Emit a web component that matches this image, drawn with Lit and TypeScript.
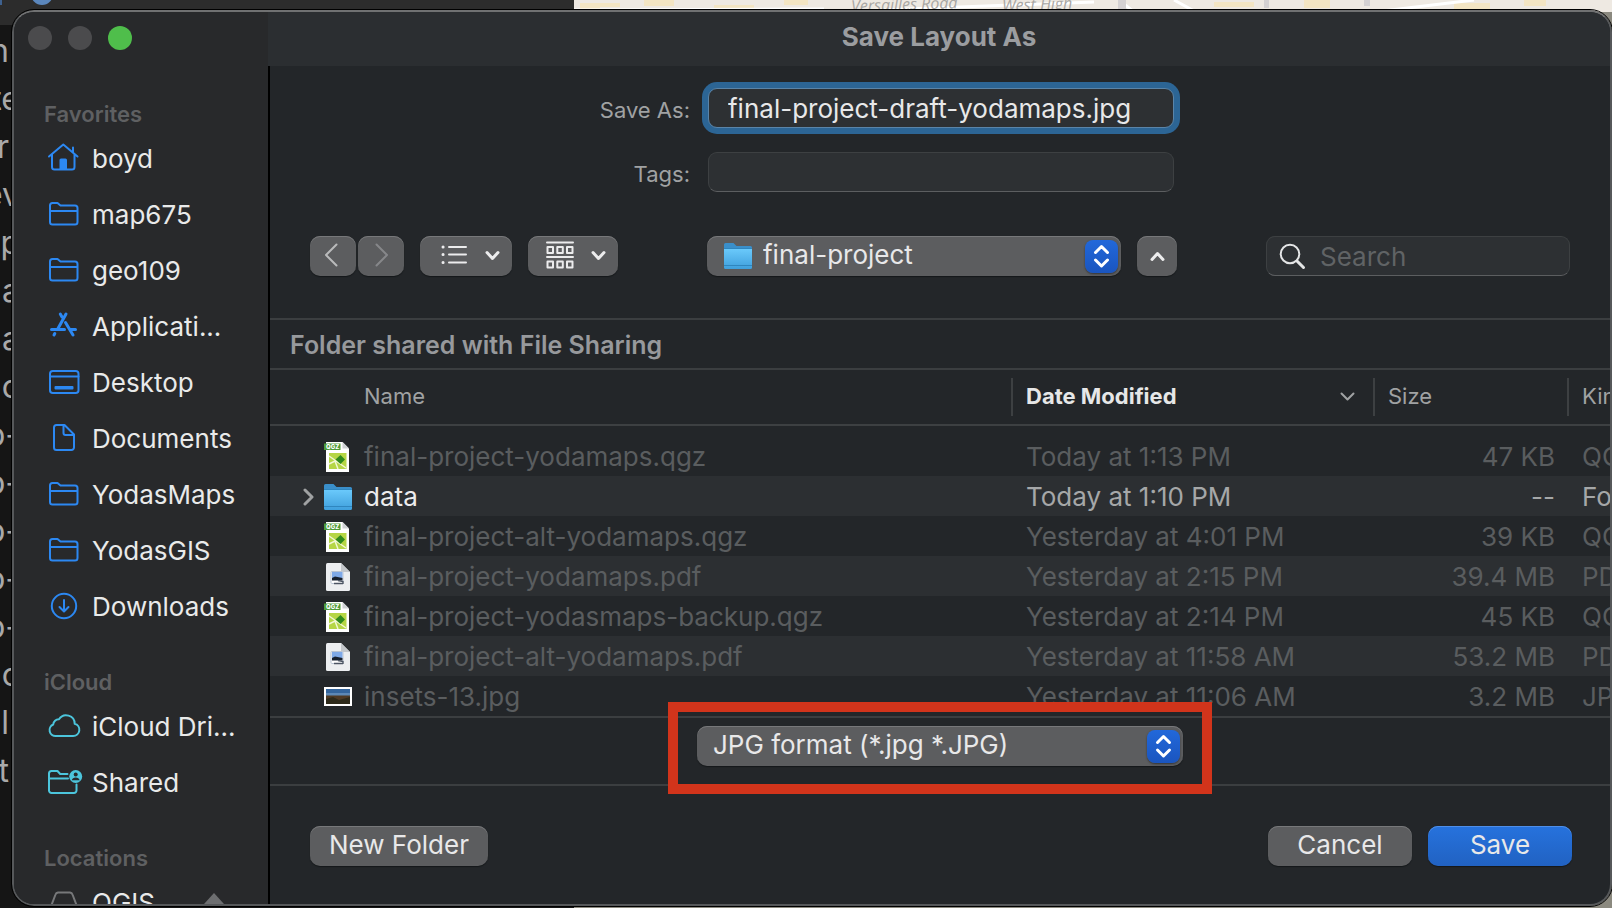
import { LitElement, html, svg, css, nothing } from "lit";
import { customElement, property, state } from "lit/decorators.js";
import { classMap } from "lit/directives/class-map.js";

type Place = { icon: string; label: string; eject?: boolean };
type Section = { title: string; cloud?: boolean; muted?: boolean; places: Place[] };
type FileRow = { icon: string; name: string; date: string; size: string; kind: string; folder?: boolean };

const SECTIONS: Section[] = [
  {
    title: "Favorites",
    places: [
      { icon: "home", label: "boyd" },
      { icon: "folder", label: "map675" },
      { icon: "folder", label: "geo109" },
      { icon: "apps", label: "Applicati..." },
      { icon: "desktop", label: "Desktop" },
      { icon: "document", label: "Documents" },
      { icon: "folder", label: "YodasMaps" },
      { icon: "folder", label: "YodasGIS" },
      { icon: "download", label: "Downloads" },
    ],
  },
  {
    title: "iCloud",
    cloud: true,
    places: [
      { icon: "cloud", label: "iCloud Dri..." },
      { icon: "shared", label: "Shared" },
    ],
  },
  { title: "Locations", muted: true, places: [{ icon: "drive", label: "QGIS", eject: true }] },
];

const FILES: FileRow[] = [
  { icon: "qgz", name: "final-project-yodamaps.qgz", date: "Today at 1:13 PM", size: "47 KB", kind: "QGIS" },
  { icon: "dir", name: "data", date: "Today at 1:10 PM", size: "--", kind: "Folder", folder: true },
  { icon: "qgz", name: "final-project-alt-yodamaps.qgz", date: "Yesterday at 4:01 PM", size: "39 KB", kind: "QGIS" },
  { icon: "pdf", name: "final-project-yodamaps.pdf", date: "Yesterday at 2:15 PM", size: "39.4 MB", kind: "PDF" },
  { icon: "qgz", name: "final-project-yodasmaps-backup.qgz", date: "Yesterday at 2:14 PM", size: "45 KB", kind: "QGIS" },
  { icon: "pdf", name: "final-project-alt-yodamaps.pdf", date: "Yesterday at 11:58 AM", size: "53.2 MB", kind: "PDF" },
  { icon: "jpg", name: "insets-13.jpg", date: "Yesterday at 11:06 AM", size: "3.2 MB", kind: "JPEG" },
];

const BACKDROP_LINES = ["n", "te", "r", "ev", "p", "a", "a", "c", "p-", "p-", "p-", "p-", "p-", "c", "l", "t"];
const LINE_ENDS = ["n", "r", "l", "t"];

const GLYPHS: Record<string, unknown> = {
  home: svg`<path d="M1 13.5 15.3 1.5 29.5 13.5M4 11.5V24a2.5 2.5 0 0 0 2.5 2.5h17.5a2.500 2.500 0 0 0 2.500-2.500V11.500M25 9V4.500"/><path class="solid" d="M11.500 26V17a1.500 1.500 0 0 1 1.500-1.500h4.500a1.500 1.500 0 0 1 1.500 1.500v9z"/>`,
  folder: svg`<path d="M2 23V6.500A2.500 2.500 0 0 1 4.500 4H9.500l3 2.500H27A2.500 2.500 0 0 1 29.500 9V23A2.500 2.500 0 0 1 27 25.500H4.500A2.500 2.500 0 0 1 2 23zM2 12H29.500"/>`,
  apps: svg`<path class="thick" d="M12.300 3 14 6M18 3 10 17.500M3.500 18.500H16.500M22.500 18.500H27.500M6.800 22.500 6 24M17.500 11.500 25 24"/>`,
  desktop: svg`<rect x="2" y="4" width="28.500" height="22" rx="2.800"/><path d="M2 9.500H30.500"/><rect class="solid" x="6.500" y="19" width="19" height="3.500" rx="1"/>`,
  document: svg`<path d="M6 24.500V4.500A2.500 2.500 0 0 1 8.500 2H16.500L26 11.500V24.500A2.500 2.500 0 0 1 23.500 27H8.500A2.500 2.500 0 0 1 6 24.500zM15.500 2.500V10a2 2 0 0 0 2 2h8"/>`,
  download: svg`<circle cx="16" cy="15" r="12.200"/><path d="M16 9V20M11.500 16 16 20.500 20.500 16"/>`,
  cloud: svg`<path d="M8 25H25a6.200 6.200 0 0 0 1.700-12.200A8.500 8.500 0 0 0 11 8.300 5.500 5.500 0 0 0 5.200 13.500 6 6 0 0 0 8 25z"/>`,
  shared: svg`<path d="M19.500 7H12.200L9.500 4H3.500A2.500 2.500 0 0 0 1 6.500V23.500A2.500 2.500 0 0 0 3.500 26H26A2.500 2.500 0 0 0 28.500 23.500V17.500M1 11.500H20"/><circle class="solid" cx="27.700" cy="9.500" r="6.500"/><circle class="hole" cx="27.700" cy="7.500" r="2"/><path class="hole" d="M23.800 13.200a4 3.600 0 0 1 7.800 0z"/>`,
  drive: svg`<path d="M2 22 7.500 7.500A3 3 0 0 1 10 5.500H22A3 3 0 0 1 24.500 7.500L30 22M2 19H30"/>`,
};

const folderArt = svg`
  <defs>
    <linearGradient id="front" x1="0" y1="0" x2="0" y2="1">
      <stop offset="0" stop-color="#6ac9fb"/><stop offset="1" stop-color="#3f9fdc"/>
    </linearGradient>
  </defs>
  <path fill="#3a8fca" d="M0 3.500A1.500 1.500 0 0 1 1.500 2H9.500l3 3H26.500A1.500 1.500 0 0 1 28 6.500V10H0z"/>
  <path fill="url(#front)" d="M0 8H28V26.500a1.500 1.500 0 0 1-1.500 1.500H1.500A1.500 1.500 0 0 1 0 26.500z"/>
  <path stroke="#2f86bf" stroke-width="1" d="M0 7.500H28M0 24.500H28" fill="none"/>`;

const FILE_ART: Record<string, unknown> = {
  dir: folderArt,
  qgz: svg`
    <path fill="#fff" d="M2 0H18.500L25 6.500V30H2z"/>
    <path fill="#cfd2d4" d="M18.500 0V6.500H25z"/>
    <rect x="5" y="11" width="17.500" height="16" fill="#b5d645"/>
    <path stroke="#f1f7d5" stroke-width="1.500" fill="none" d="M5 14 22 26M5 22l6-3 3 8"/>
    <path fill="#2f8a1d" d="M11.500 17.500 16.500 13 21 17.500 16.500 22z"/>
    <path fill="#4d9a38" d="M0 1.500H16.500V8H0z"/>
    <text x="2" y="7" font-family="Inter, sans-serif" font-weight="800" font-size="6" fill="#fff">QGZ</text>`,
  pdf: svg`
    <path fill="#eceef0" d="M3.500 1H17L26 10V27.500a1.500 1.500 0 0 1-1.500 1.500H3.500A1.500 1.500 0 0 1 2 27.500V2.500A1.500 1.500 0 0 1 3.500 1z"/>
    <path fill="#c3c7cb" d="M17 1V8.500A1.500 1.500 0 0 0 18.500 10H26z"/>
    <rect x="7" y="9.500" width="12" height="12" rx="1" fill="#fff" stroke="#b9c3d2" stroke-width="1"/>
    <rect x="8" y="10" width="10.500" height="6" fill="#7ea9e8"/>
    <path fill="#16202f" d="M8 16 11 14.500 18.500 16V18.500H8z"/>
    <path fill="none" stroke="#4c5563" stroke-width="1.300" d="M10 21.500h9M14 18.500l5 1v2.500"/>`,
  jpg: svg`
    <rect x="0" y="5" width="28" height="19" fill="#fff"/>
    <rect x="2" y="7" width="24" height="15" fill="#5d88b5"/>
    <rect x="2" y="7" width="24" height="4" fill="#34659c"/>
    <rect x="2" y="13.500" width="24" height="8.500" fill="#4f3a24"/>
    <path fill="#2e2a1a" d="M2 17l7-2 6 3 11-3v7H2z"/>`,
};

const chevronDown = svg`<path d="M1.500 2.500 7 8.500 12.500 2.500"/>`;

@customElement("place-list")
class PlaceList extends LitElement {
  @property({ attribute: false }) sections: Section[] = [];

  static styles = css`
    :host { display: block; }
    .title { margin: 0; height: 34px; padding-left: 30px; font-size: 22px; line-height: 34px; font-weight: 600; color: #5f6062; }
    .section + .section { margin-top: 30px; }
    ul { list-style: none; margin: 0; padding: 0; }
    .place { display: flex; align-items: center; gap: 12px; box-sizing: border-box; height: 56px; padding: 0 44px 2px 34px; font-size: 26px; color: #e9eaea; text-decoration: none; white-space: nowrap; }
    .icon { flex: none; width: 32px; height: 30px; overflow: visible; fill: none; stroke: #2c88f2; stroke-width: 2; stroke-linecap: round; stroke-linejoin: round; }
    .icon .solid { fill: #2c88f2; stroke: none; }
    .icon .thick { stroke-width: 3; }
    .cloud .icon { stroke: #4cc5dc; }
    .cloud .icon .solid { fill: #4cc5dc; }
    .icon .hole { fill: #28292b; stroke: none; }
    .muted .icon { stroke: #77787a; }
    .eject { width: 20px; height: 20px; margin-left: auto; fill: #6d6e70; }
  `;

  render() {
    return this.sections.map(
      (s) => html`
        <section class=${classMap({ section: true, cloud: !!s.cloud, muted: !!s.muted })}>
          <h2 class="title">${s.title}</h2>
          <ul>
            ${s.places.map(
              (p) => html`<li>
                <a class="place" href="#">
                  <svg class="icon" viewBox="0 0 32 30" aria-hidden="true">${GLYPHS[p.icon]}</svg>
                  <span>${p.label}</span>
                  ${p.eject ? html`<svg class="eject" viewBox="0 0 20 20" aria-hidden="true"><path d="M10 1 20 12H0z" /></svg>` : nothing}
                </a>
              </li>`
            )}
          </ul>
        </section>
      `
    );
  }
}

@customElement("popup-select")
class PopupSelect extends LitElement {
  @property() label = "";
  @property() value = "";
  @property({ type: Boolean }) folder = false;

  static styles = css`
    :host { display: grid; }
    select, .decor { grid-area: 1 / 1; }
    select { appearance: none; box-sizing: border-box; width: 100%; height: 40px; margin: 0; border: 0; border-radius: 10px; padding: 0 48px 2px 16px; font: 26px/38px Inter, sans-serif; color: #e8e8e9; background: #5c5d5f; box-shadow: inset 0 1px #77787a, 0 1px 1px #15181a; }
    select.with-folder { padding-left: 56px; }
    .decor { display: flex; align-items: center; justify-content: space-between; padding: 0 3px 0 17px; pointer-events: none; }
    .folder { width: 28px; height: 30px; }
    .stepper { width: 33px; height: 33px; margin-left: auto; border-radius: 8px; background: linear-gradient(#2268da, #1a55bf); box-shadow: 0 1px 2px #333436; }
    .stepper svg { display: block; width: 33px; height: 33px; fill: none; stroke: #fff; stroke-width: 3; stroke-linecap: round; stroke-linejoin: round; }
  `;

  render() {
    return html`
      <select class=${this.folder ? "with-folder" : ""} aria-label=${this.label}>
        <option>${this.value}</option>
      </select>
      <div class="decor" aria-hidden="true">
        ${this.folder ? html`<svg class="folder" viewBox="0 0 28 30">${folderArt}</svg>` : nothing}
        <span class="stepper"><svg viewBox="0 0 33 33"><path d="M10.500 12.500 16.500 6.500 22.500 12.500M10.500 20 16.500 26 22.500 20" /></svg></span>
      </div>
    `;
  }
}

@customElement("file-table")
class FileTable extends LitElement {
  @property({ attribute: false }) files: FileRow[] = [];

  static styles = css`
    :host { display: block; overflow: hidden; }
    table { width: 100%; table-layout: fixed; border-collapse: collapse; font-size: 26px; color: #5a5d5f; }
    .date { width: 362px; }
    .size { width: 194px; }
    .kind { width: 43px; }
    thead { border-bottom: 2px solid #3d4042; }
    th { box-sizing: border-box; height: 55px; padding: 0 0 2px 15px; text-align: left; font-size: 22px; font-weight: 400; color: #a0a2a3; white-space: nowrap; overflow: hidden; background: linear-gradient(#3d4042, #3d4042) left center / 2px 38px no-repeat; }
    th:first-child { padding-left: 94px; background: none; }
    .sorted { display: flex; align-items: center; justify-content: space-between; padding-right: 18px; font-weight: 700; color: #e6e7e7; }
    .arrow { width: 15px; height: 11px; fill: none; stroke: #a0a2a3; stroke-width: 2; stroke-linecap: round; stroke-linejoin: round; }
    tbody::before { content: ""; display: block; height: 10px; }
    tbody tr:nth-child(even) { background: #2c2f32; }
    td { box-sizing: border-box; height: 40px; padding: 2px 0 0 15px; line-height: 38px; white-space: nowrap; overflow: hidden; }
    td.amount { text-align: right; padding-right: 12px; }
    td:first-child { padding-left: 33px; }
    .name { display: flex; align-items: center; }
    .open { flex: none; width: 11px; height: 18px; margin-right: 10px; fill: none; stroke: #a0a2a3; stroke-width: 3; stroke-linecap: round; stroke-linejoin: round; }
    .art { flex: none; width: 28px; height: 30px; margin-right: 12px; overflow: visible; }
    .folder { color: #a5a7a8; }
    .folder .name { color: #ececed; }
  `;

  render() {
    return html`
      <table>
        <colgroup><col /><col class="date" /><col class="size" /><col class="kind" /></colgroup>
        <thead>
          <tr>
            <th scope="col">Name</th>
            <th scope="col" aria-sort="descending">
              <div class="sorted">Date Modified<svg class="arrow" viewBox="0 0 14 11"><path d="M1 2.500 7 8.500 13 2.500" /></svg></div>
            </th>
            <th scope="col">Size</th>
            <th scope="col">Kind</th>
          </tr>
        </thead>
        <tbody>
          ${this.files.map(
            (f) => html`<tr class=${f.folder ? "folder" : ""}>
              <td>
                <div class="name">
                  <svg class="open" viewBox="0 0 11 18" aria-hidden="true">${f.folder ? svg`<path d="M2 2 9 9 2 16" />` : nothing}</svg>
                  <svg class="art" viewBox="0 0 28 30" aria-hidden="true">${FILE_ART[f.icon]}</svg>
                  <span>${f.name}</span>
                </div>
              </td>
              <td>${f.date}</td>
              <td class="amount">${f.size}</td>
              <td>${f.kind}</td>
            </tr>`
          )}
        </tbody>
      </table>
    `;
  }
}

@customElement("app-root")
class AppRoot extends LitElement {
  @state() private fileName = "final-project-draft-yodamaps.jpg";

  static styles = css`
    :host { display: grid; height: 100vh; min-height: 600px; overflow: hidden; font-family: Inter, "Liberation Sans", sans-serif; background: #161616; }
    .backdrop, .window { grid-area: 1 / 1; min-width: 0; min-height: 0; }
    .backdrop { display: grid; grid-template-columns: 574px 1fr; overflow: hidden; }
    .editor { background: linear-gradient(#2c2c2c 25px, #151515 25px); overflow: hidden; }
    .bar { display: flex; align-items: flex-end; justify-content: space-between; width: 53px; height: 5px; }
    .bar i { width: 2px; height: 5px; background: #3e618f; }
    .bar b { width: 22px; height: 22px; border-radius: 50%; background: #5b87bd; }
    .lines { display: flex; flex-direction: column; align-items: flex-end; width: 20px; padding-top: 22px; font-size: 32px; line-height: 48px; color: #a9a9a9; }
    .line-end { padding-right: 11px; }
    .map { overflow: hidden; background: #8b897f; }
    .streets { position: relative; height: 12px; overflow: hidden; }
    .streets svg { display: block; width: 1038px; height: 12px; }
    .road { position: absolute; top: -6px; font: italic 16px/20px "Open Sans", sans-serif; color: #a8a6a3; white-space: nowrap; transform: rotate(-2deg); }
    .versailles { left: 277px; }
    .west { left: 428px; }

    .window { position: relative; display: flex; margin: 10px 0 2px 12px; border: 2px solid #56585a; border-top-color: #707172; border-radius: 22px; overflow: hidden; background: #232629; outline: 1px solid #000; }
    .sidebar { flex: none; width: 254px; overflow: hidden; background: #28292b; }
    .lights { display: flex; gap: 16px; padding: 14px 0 47px 14px; }
    .light { width: 24px; height: 24px; border: 0; border-radius: 50%; padding: 0; background: #4b4b4d; }
    .zoom { background: #4fbe4b; }
    .main { flex: 1; min-width: 0; display: flex; flex-direction: column; }
    .title { flex: none; margin: 0; height: 54px; line-height: 50px; font-size: 26px; font-weight: 700; text-align: center; color: #9b9da0; background: #2b2e31; }
    .body { flex: 1; min-height: 0; display: flex; flex-direction: column; border-left: 2px solid #000; }
    .form { display: grid; grid-template-columns: 1fr 466px 1fr; gap: 24px 18px; align-items: center; padding: 22px 0 0 2px; }
    .form label { grid-column: 1; padding-top: 3px; text-align: right; font-size: 22px; color: #a0a2a3; }
    .field { grid-column: 2; }
    .field, .search { box-sizing: border-box; width: 100%; height: 40px; margin: 0; border: 1px solid #3d4042; border-bottom-color: #5c5e60; border-radius: 9px; padding: 0 19px; font: 26px/38px Inter, sans-serif; color: #e8e8e9; background: #2d3033; outline: none; }
    .active { border-color: #5a84a8; box-shadow: 0 0 0 6px #2c6595; }
    .toolbar { display: flex; justify-content: space-between; padding: 44px 40px 42px; }
    .group { display: flex; gap: 16px; }
    .nav { display: flex; gap: 2px; }
    .button { display: flex; align-items: center; justify-content: center; height: 40px; margin: 0; border: 0; border-radius: 10px; padding: 0 19px 2px; font: 26px/38px Inter, sans-serif; color: #e8e8e9; background: #5c5d5f; box-shadow: inset 0 1px #77787a, 0 1px 1px #15181a; }
    .button svg { fill: none; stroke: #ececed; stroke-width: 2; stroke-linecap: round; stroke-linejoin: round; }
    .step { width: 46px; padding: 0 4px 2px 0; }
    .step svg { width: 14px; height: 24px; stroke: #b9babb; }
    .next { padding: 0 0 2px 2px; }
    .next svg { stroke: #86878a; }
    .view { gap: 17px; width: 92px; padding: 0 12px 2px 20px; }
    .arrange { width: 90px; padding-left: 18px; }
    .glyph { width: 28px; height: 28px; }
    .button .down { width: 15px; height: 11px; stroke-width: 3; }
    .up { width: 40px; padding: 0; }
    .button .caret { width: 15px; height: 11px; stroke-width: 3; }
    .path { width: 414px; }
    .finder { display: grid; width: 304px; }
    .finder > * { grid-area: 1 / 1; }
    .search { padding: 0 16px 0 53px; }
    .search::placeholder { color: #606365; opacity: 1; }
    .lens { align-self: center; width: 28px; height: 28px; margin-left: 12px; fill: none; stroke: #e4e5e6; stroke-width: 2; stroke-linecap: round; }
    .shared { margin: 0; padding: 2px 0 0 20px; border: solid #3b3e40; border-width: 2px 0; font-size: 25px; line-height: 46px; font-weight: 600; color: #97999c; }
    .format { position: relative; display: flex; justify-content: center; padding: 8px 0 18px; border: solid #3b3e40; border-width: 2px 0; }
    .type { width: 486px; }
    .marker { position: absolute; inset: -16px 0 -10px; width: 544px; margin: 0 auto; box-sizing: border-box; border: 10px solid #d2341b; pointer-events: none; }
    .actions { flex: 1; display: flex; align-items: center; gap: 16px; padding: 2px 38px 0 40px; }
    .new { margin-right: auto; }
    .wide { width: 144px; }
    .primary { background: linear-gradient(#2672dd, #2162c2); box-shadow: inset 0 1px #4f8fe8, 0 1px 1px #15181a; }
  `;

  render() {
    return html`
      <div class="backdrop" aria-hidden="true">
        <div class="editor">
          <div class="bar"><i></i><b></b></div>
          <div class="lines">
            ${BACKDROP_LINES.map((t) => html`<span class=${LINE_ENDS.includes(t) ? "line-end" : ""}>${t}</span>`)}
          </div>
        </div>
        <div class="map">
          <div class="streets">
            <svg viewBox="0 0 1038 12">
              <rect width="1038" height="12" fill="#eee9e2" />
              <path d="M6 3h40v4h-20v5h-20zM70 0h30v6h-30zM140 5h40v5h-40zM210 0h24v5h-24zM640 2h40v5h-40zM730 0h26v8h-26zM880 3h36v6h-36zM950 0h22v6h-22z" fill="#f3e5c3" />
              <path d="M255 12 520 2M560 12 545 0M600 0 622 12M800 12 900 0M0 10 250 9" stroke="#fff" stroke-width="3" fill="none" />
              <path d="M544 0h8v12h-8zM690 0h5v8h-5zM790 0h6v6h-6z" fill="#d4d1d2" />
            </svg>
            <span class="road versailles">Versailles Road</span>
            <span class="road west">West High</span>
          </div>
        </div>
      </div>

      <div class="window" role="dialog" aria-labelledby="dialog-title">
        <nav class="sidebar" aria-label="Places">
          <div class="lights">
            <button class="light" aria-label="Close"></button>
            <button class="light" aria-label="Minimize"></button>
            <button class="light zoom" aria-label="Zoom"></button>
          </div>
          <place-list .sections=${SECTIONS}></place-list>
        </nav>

        <main class="main">
          <h1 class="title" id="dialog-title">Save Layout As</h1>
          <div class="body">
            <div class="form">
              <label for="file-name">Save As:</label>
              <input class="field active" id="file-name" type="text" .value=${this.fileName}
                @input=${(e: Event) => (this.fileName = (e.target as HTMLInputElement).value)} />
              <label for="tags">Tags:</label>
              <input class="field" id="tags" type="text" />
            </div>

            <div class="toolbar">
              <div class="group">
                <div class="nav">
                  <button class="button step" aria-label="Back"><svg viewBox="0 0 14 24"><path d="M12.500 1.500 2 12 12.500 22.500" /></svg></button>
                  <button class="button step next" aria-label="Forward"><svg viewBox="0 0 14 24"><path d="M1.500 1.500 12 12 1.500 22.500" /></svg></button>
                </div>
                <button class="button view" aria-label="List view">
                  <svg class="glyph" viewBox="0 0 28 28"><path d="M9 6H26M9 13.500H26M9 21.500H26" /><path stroke-width="3" d="M3 6h.1M3 13.500h.1M3 21.500h.1" /></svg>
                  <svg class="down" viewBox="0 0 14 11">${chevronDown}</svg>
                </button>
                <button class="button view arrange" aria-label="Group items">
                  <svg class="glyph" viewBox="0 0 28 28"><path d="M1 1.500H27M1 16H27" /><path d="M1.500 6h5.500v6H1.500zM11.300 6h5.500v6h-5.500zM21 6h5.500v6H21zM1.500 20.500h5.500v6H1.500zM11.300 20.500h5.500v6h-5.500zM21 20.500h5.500v6H21z" /></svg>
                  <svg class="down" viewBox="0 0 14 11">${chevronDown}</svg>
                </button>
              </div>
              <div class="group">
                <popup-select class="path" label="Folder" value="final-project" folder></popup-select>
                <button class="button up" aria-label="Collapse"><svg class="caret" viewBox="0 0 14 11"><path d="M1.500 8.500 7 2.500 12.500 8.500" /></svg></button>
              </div>
              <div class="finder">
                <input class="search" type="search" placeholder="Search" aria-label="Search" />
                <svg class="lens" viewBox="0 0 28 28" aria-hidden="true"><circle cx="12" cy="12" r="9.300" /><path stroke-width="3" d="M19 19 25.500 25.500" /></svg>
              </div>
            </div>

            <h2 class="shared">Folder shared with File Sharing</h2>
            <file-table .files=${FILES}></file-table>

            <div class="format">
              <popup-select class="type" label="Format" value="JPG format (*.jpg *.JPG)"></popup-select>
              <div class="marker"></div>
            </div>

            <div class="actions">
              <button class="button new">New Folder</button>
              <button class="button wide">Cancel</button>
              <button class="button wide primary">Save</button>
            </div>
          </div>
        </main>
      </div>
    `;
  }
}
